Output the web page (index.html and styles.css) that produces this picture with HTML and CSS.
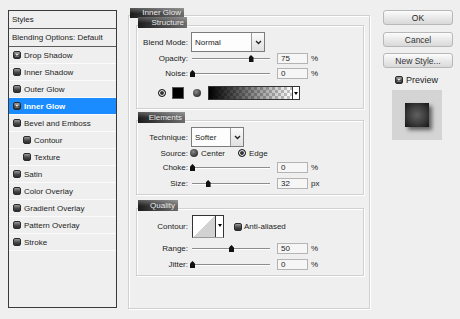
FILE: index.html
```html
<!DOCTYPE html>
<html lang="en">
<head>
    <meta charset="UTF-8">
    <title>Layer Style - Inner Glow</title>
    <link rel="stylesheet" href="styles.css">
</head>
<body>
    <div class="dialog">
        <div class="styles-list">
            <div class="list-head">Styles</div>
            <div class="list-blend">Blending Options: Default</div>
            <div class="list-item"><span class="chk"><svg viewBox="0 0 8 8"><path d="M2.2 2.2L5.8 5.8M5.8 2.2L2.2 5.8" stroke="#eee" stroke-width="1.4"/></svg></span>Drop Shadow</div>
            <div class="list-item"><span class="chk"></span>Inner Shadow</div>
            <div class="list-item"><span class="chk"></span>Outer Glow</div>
            <div class="list-item active"><span class="chk"><svg viewBox="0 0 8 8"><path d="M2.2 2.2L5.8 5.8M5.8 2.2L2.2 5.8" stroke="#eee" stroke-width="1.4"/></svg></span>Inner Glow</div>
            <div class="list-item"><span class="chk"></span>Bevel and Emboss</div>
            <div class="list-item sub"><span class="chk"></span>Contour</div>
            <div class="list-item sub"><span class="chk"></span>Texture</div>
            <div class="list-item"><span class="chk"></span>Satin</div>
            <div class="list-item"><span class="chk"></span>Color Overlay</div>
            <div class="list-item"><span class="chk"></span>Gradient Overlay</div>
            <div class="list-item"><span class="chk"></span>Pattern Overlay</div>
            <div class="list-item"><span class="chk"></span>Stroke</div>
        </div>

        <div class="main">
            <div class="tab tab-top">Inner Glow</div>
            <div class="outer">
                <div class="group">
                    <div class="tab tab-structure">Structure</div>
                    <div class="box box-structure">
                        <div class="row">
                            <span class="lbl">Blend Mode:</span>
                            <div class="select select-blend">
                                <span class="select-val">Normal</span>
                                <span class="select-btn"><svg viewBox="0 0 8 6"><path d="M1 1.3l3 3 3-3" fill="none" stroke="#222" stroke-width="1.6"/></svg></span>
                            </div>
                        </div>
                        <div class="row row-opacity">
                            <span class="lbl">Opacity:</span>
                            <div class="slider"><span class="thumb" style="left: 75%"></span></div>
                            <span class="num">75</span>
                            <span class="unit">%</span>
                        </div>
                        <div class="row row-noise">
                            <span class="lbl">Noise:</span>
                            <div class="slider"><span class="thumb" style="left: 0%"></span></div>
                            <span class="num">0</span>
                            <span class="unit">%</span>
                        </div>
                        <div class="row row-color">
                            <span class="radio on"></span>
                            <span class="swatch"></span>
                            <span class="radio radio-color"></span>
                            <div class="grad">
                                <span class="grad-fill"></span>
                                <span class="grad-btn"><span class="tri"></span></span>
                            </div>
                        </div>
                    </div>
                </div>

                <div class="group group-elements">
                    <div class="tab tab-elements">Elements</div>
                    <div class="box box-elements">
                        <div class="row">
                            <span class="lbl">Technique:</span>
                            <div class="select select-tech">
                                <span class="select-val">Softer</span>
                                <span class="select-btn"><svg viewBox="0 0 8 6"><path d="M1 1.3l3 3 3-3" fill="none" stroke="#222" stroke-width="1.6"/></svg></span>
                            </div>
                        </div>
                        <div class="row row-source">
                            <span class="lbl">Source:</span>
                            <span class="radio"></span>
                            <span class="opt">Center</span>
                            <span class="radio on radio-edge"></span>
                            <span class="opt">Edge</span>
                        </div>
                        <div class="row row-choke">
                            <span class="lbl">Choke:</span>
                            <div class="slider"><span class="thumb" style="left: 0%"></span></div>
                            <span class="num">0</span>
                            <span class="unit">%</span>
                        </div>
                        <div class="row row-size">
                            <span class="lbl">Size:</span>
                            <div class="slider"><span class="thumb" style="left: 20%"></span></div>
                            <span class="num">32</span>
                            <span class="unit">px</span>
                        </div>
                    </div>
                </div>

                <div class="group group-quality">
                    <div class="tab tab-quality">Quality</div>
                    <div class="box box-quality">
                        <div class="row row-contour">
                            <span class="lbl">Contour:</span>
                            <div class="contour">
                                <span class="contour-fill"></span>
                                <span class="contour-btn"><span class="tri"></span></span>
                            </div>
                            <span class="chk chk-aa"></span>
                            <span class="opt">Anti-aliased</span>
                        </div>
                        <div class="row row-range">
                            <span class="lbl">Range:</span>
                            <div class="slider"><span class="thumb" style="left: 50%"></span></div>
                            <span class="num">50</span>
                            <span class="unit">%</span>
                        </div>
                        <div class="row row-jitter">
                            <span class="lbl">Jitter:</span>
                            <div class="slider"><span class="thumb" style="left: 0%"></span></div>
                            <span class="num">0</span>
                            <span class="unit">%</span>
                        </div>
                    </div>
                </div>
            </div>
        </div>

        <div class="side">
            <div class="btn">OK</div>
            <div class="btn btn-cancel">Cancel</div>
            <div class="btn btn-new">New Style...</div>
            <div class="preview-toggle">
                <span class="chk"><svg viewBox="0 0 8 8"><path d="M2.2 2.2L5.8 5.8M5.8 2.2L2.2 5.8" stroke="#eee" stroke-width="1.4"/></svg></span>
                <span>Preview</span>
            </div>
            <div class="preview"><span class="preview-square"></span></div>
        </div>
    </div>
</body>
</html>
```

FILE: styles.css
```css
body {
    margin: 0;
    width: 460px;
    height: 319px;
    overflow: hidden;
    background: #efefef;
    font-family: "Liberation Sans", Arial, sans-serif;
    font-size: 8px;
    color: #1c1c1c;
}
.dialog { display: flex; align-items: flex-start; }

/* styles list */
.styles-list {
    box-sizing: border-box;
    width: 109px;
    height: 298px;
    margin: 10px 0 0 8px;
    border: 1px solid #3a3a3a;
    background: #efefef;
}
.list-head, .list-blend {
    box-sizing: border-box;
    height: 18px;
    padding-left: 3px;
    border-bottom: 1px solid #5c5c5c;
    display: flex;
    align-items: center;
}
.list-item {
    box-sizing: border-box;
    height: 17px;
    padding-left: 4px;
    border-bottom: 1px solid #fbfbfb;
    display: flex;
    align-items: center;
}
.list-item.sub { padding-left: 14px; }
.list-item.active { background: #1a8cff; color: #fff; font-weight: bold; }
.list-item .chk { margin-right: 3px; }

.chk {
    box-sizing: border-box;
    width: 8px;
    height: 8px;
    flex: none;
    border: 1px solid #2a2a2a;
    border-radius: 2px;
    background: linear-gradient(#9a9a9a, #4a4a4a 55%, #2c2c2c);
    display: flex;
}
.chk svg { width: 6px; height: 6px; }

/* main panel */
.main { width: 242px; margin: 8px 0 0 11px; }
.tab {
    position: relative;
    z-index: 1;
    box-sizing: border-box;
    height: 11px;
    margin-left: 2px;
    padding-right: 3px;
    text-align: right;
    line-height: 11px;
    color: #ececec;
    background: linear-gradient(rgba(255,255,255,.28), rgba(255,255,255,0) 55%),
                linear-gradient(to right, #1c1c1c, #4a4a4a 55%, #6c6c6c);
}
.tab-top { width: 54px; height: 10px; line-height: 10px; }
.tab-structure { width: 49px; }
.tab-elements { width: 47px; }
.tab-quality { width: 40px; }

.outer, .box {
    box-sizing: border-box;
    margin-top: -3px;
    border: 1px solid #d0d0d0;
    box-shadow: inset 1px 1px 0 #fff, 1px 1px 0 #fff;
}
.outer { height: 294px; padding: 1px 5px 0 7px; }
.box { padding-top: 6px; }
.box-structure { height: 84px; }
.box-elements { height: 75px; }
.box-quality { height: 68px; }
.group-elements { margin-top: 3px; }
.group-quality { margin-top: 5px; }

.row { display: flex; align-items: center; }
.lbl { width: 51px; flex: none; text-align: right; }

.select {
    box-sizing: border-box;
    height: 20px;
    margin-left: 3px;
    border: 1px solid #7c7c7c;
    background: #fdfdfd;
    display: flex;
}
.select-blend { width: 74px; }
.select-tech { width: 53px; }
.select-val { flex: 1; padding-left: 3px; display: flex; align-items: center; }
.select-btn {
    width: 12px;
    border-left: 1px solid #9a9a9a;
    background: linear-gradient(#fbfbfb, #e0e0e0);
    display: flex;
    align-items: center;
    justify-content: center;
}
.select-btn svg { width: 7px; height: 5px; }

.slider {
    position: relative;
    width: 78px;
    height: 11px;
    margin-left: 4px;
    flex: none;
    background: linear-gradient(transparent 5px, #8c8c8c 5px, #8c8c8c 6px, #fff 6px, #fff 7px, transparent 7px);
}
.thumb {
    position: absolute;
    top: 2px;
    width: 5px;
    height: 7px;
    margin-left: -2px;
    background: #111;
    clip-path: polygon(50% 0, 100% 35%, 100% 100%, 0 100%, 0 35%);
}
.num {
    box-sizing: border-box;
    width: 31px;
    height: 11px;
    margin-left: 7px;
    padding-left: 3px;
    border: 1px solid #b4b4b4;
    background: #f6f6f6;
    line-height: 9px;
}
.unit { margin-left: 3px; }

.row-opacity { margin-top: 1px; }
.row-noise { margin-top: 4px; }
.row-color { margin-top: 7px; height: 14px; padding-left: 21px; }

.radio {
    box-sizing: border-box;
    width: 8px;
    height: 8px;
    flex: none;
    border-radius: 50%;
    background: radial-gradient(circle at 40% 35%, #8a8a8a, #3c3c3c 65%, #222);
}
.radio.on {
    border: 1.5px solid #1e1e1e;
    background: #333;
    box-shadow: inset 0 0 0 1px #fff;
}
.swatch {
    box-sizing: border-box;
    width: 12px;
    height: 12px;
    margin-left: 6px;
    border: 1px solid #555;
    background: #000;
}
.radio-color { margin-left: 9px; }
.grad {
    box-sizing: border-box;
    width: 92px;
    height: 14px;
    margin-left: 7px;
    border: 1px solid #333;
    display: flex;
}
.grad-fill {
    flex: 1;
    background: linear-gradient(to right, #000, rgba(0,0,0,0)),
                repeating-conic-gradient(#c6c6c6 0 25%, #fff 0 50%) 0 0 / 6px 6px;
}
.grad-btn {
    width: 6px;
    border-left: 1px solid #333;
    background: #fff;
    display: flex;
    align-items: center;
    justify-content: center;
}
.tri {
    width: 0;
    height: 0;
    border-left: 2px solid transparent;
    border-right: 2px solid transparent;
    border-top: 3px solid #000;
}

.row-source { height: 12px; }
.row-source .radio { margin-left: 2px; }
.row-source .radio-edge { margin-left: 13px; }
.opt { margin-left: 3px; }
.row-choke { margin-top: 3px; }
.row-size { margin-top: 5px; }

.row-contour { height: 23px; }
.contour {
    box-sizing: border-box;
    width: 32px;
    height: 23px;
    margin-left: 4px;
    border: 1px solid #333;
    border-bottom-color: #999;
    display: flex;
}
.contour-fill { flex: 1; background: linear-gradient(to top left, #d2d2d2 50%, #fff 50%); }
.contour-btn {
    width: 7px;
    border-left: 1px solid #333;
    background: #fff;
    display: flex;
    justify-content: center;
    padding-top: 8px;
}
.chk-aa { margin-left: 10px; }
.chk-aa + .opt { margin-left: 2px; }
.row-range { margin-top: 5px; }
.row-jitter { margin-top: 5px; }

/* right column */
.side { width: 70px; margin: 10px 0 0 13px; }
.btn {
    box-sizing: border-box;
    height: 15px;
    border: 1px solid #b8b8b8;
    border-radius: 3px;
    background: linear-gradient(#fcfcfc, #e6e6e6 60%, #d9d9d9);
    display: flex;
    align-items: center;
    justify-content: center;
    font-size: 8.5px;
    color: #222;
}
.btn-cancel { margin-top: 7px; color: #333; }
.btn-new { margin-top: 6px; color: #333; }
.preview-toggle {
    height: 9px;
    margin-top: 7px;
    padding-left: 12px;
    display: flex;
    align-items: center;
    font-size: 9px;
}
.preview-toggle .chk { margin-right: 3px; }
.preview {
    width: 50px;
    height: 50px;
    margin: 6px 0 0 9px;
    background: #d4d4d4;
    display: flex;
    align-items: center;
    justify-content: center;
}
.preview-square {
    width: 24px;
    height: 24px;
    background: radial-gradient(#606060, #3a3a3a 55%, #151515);
    box-shadow: 3px 3px 4px rgba(0,0,0,.55);
}
```
